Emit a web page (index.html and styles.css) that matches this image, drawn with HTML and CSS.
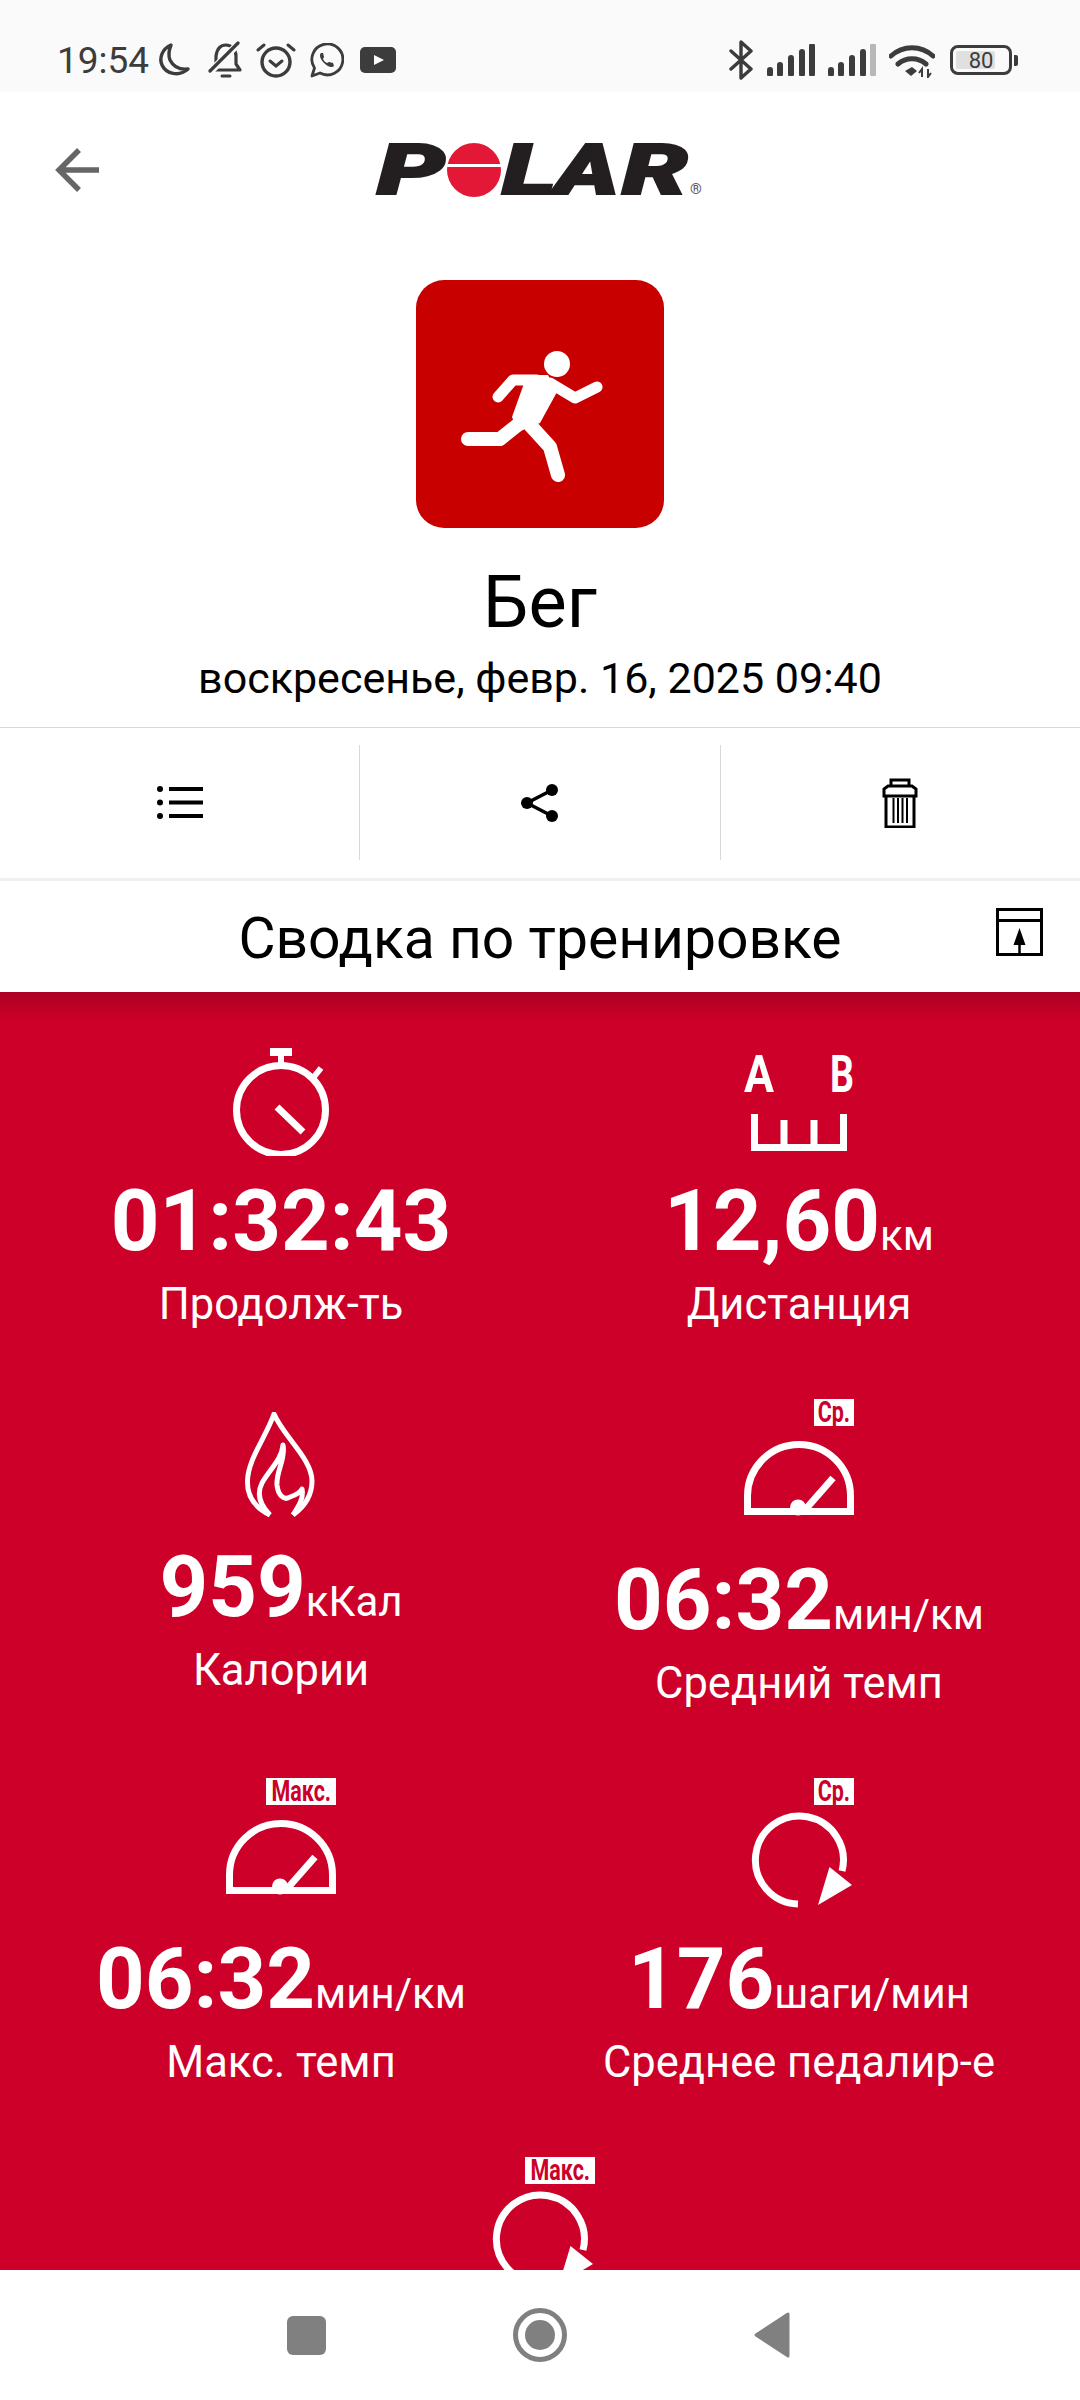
FILE: index.html
```html
<!DOCTYPE html>
<html lang="ru">
<head>
    <meta charset="UTF-8">
    <meta name="viewport" content="width=device-width, initial-scale=1.0">
    <title>Polar Flow</title>
    <link rel="stylesheet" href="styles.css">
</head>
<body>
    <div class="status-bar">
        <div class="status-left">
            <span class="clock">19:54</span>
            <svg class="ico-moon" width="34" height="36" viewBox="0 0 34 36"><path d="M14 3C5 7 2 16 5 23c4 9 17 12 26 4-9 1-15-3-18-9-2-5-1-10 1-15z" fill="none" stroke="#3c3c3c" stroke-width="3.4" stroke-linejoin="round"/></svg>
            <svg class="ico-bell" width="36" height="38" viewBox="0 0 36 38"><path d="M6 29h26l-4-6v-8c0-6-4-11-10-11S9 8 8 15v7z" fill="none" stroke="#3c3c3c" stroke-width="3.2" stroke-linejoin="round"/><path d="M2 31L31 2" stroke="#fafafa" stroke-width="7"/><path d="M2 30L30 2" stroke="#3c3c3c" stroke-width="3.2" stroke-linecap="round"/><path d="M14 35h8" stroke="#3c3c3c" stroke-width="3" stroke-linecap="round"/></svg>
            <svg class="ico-alarm" width="40" height="36" viewBox="0 0 40 36"><circle cx="20" cy="20" r="14" fill="none" stroke="#3c3c3c" stroke-width="3.4"/><path d="M14 19l6 5 6-5" fill="none" stroke="#3c3c3c" stroke-width="3" stroke-linecap="round"/><path d="M2 8l6-5M38 8l-6-5" stroke="#3c3c3c" stroke-width="3" stroke-linecap="round"/></svg>
            <svg class="ico-wa" width="34" height="35" viewBox="0 0 34 35"><path d="M2 33l2.500-8A15.500 15.500 0 1 1 10 30z" fill="none" stroke="#3c3c3c" stroke-width="2.800" stroke-linejoin="round"/><path d="M11 10c-2 2-1 6 3 10s8 5 10 3l-1-3-4-1-2 1c-2-1-3-2-4-4l1-2-1-4z" fill="#3c3c3c"/></svg>
            <svg class="ico-yt" width="36" height="26" viewBox="0 0 36 26"><rect width="36" height="26" rx="5" fill="#3c3c3c"/><path d="M14 8l10 5-10 5z" fill="#fafafa"/></svg>
        </div>
        <div class="status-right">
            <svg width="25" height="40" viewBox="0 0 25 40"><path d="M2 11l20 18-10 9V2l10 9L2 29" fill="none" stroke="#3c3c3c" stroke-width="3.400" stroke-linejoin="round" stroke-linecap="round"/></svg>
            <svg class="ico-signal" width="48" height="32" viewBox="0 0 48 32"><path d="M3 26v4M13 21v9M24 14v16M35 8v22M45 2v28" stroke="#3c3c3c" stroke-width="6" stroke-linecap="round"/></svg>
            <svg class="ico-signal" width="48" height="32" viewBox="0 0 48 32"><path d="M3 26v4M13 21v9M24 14v16M35 8v22" stroke="#3c3c3c" stroke-width="6" stroke-linecap="round"/><path d="M45 2v28" stroke="#b8b8b8" stroke-width="6" stroke-linecap="round"/></svg>
            <svg class="ico-wifi" width="46" height="34" viewBox="0 0 46 34"><path d="M2 12c12-11 30-11 42 0M9 20c8-7 20-7 28 0" fill="none" stroke="#3c3c3c" stroke-width="5" stroke-linecap="round"/><path d="M16 27l7-4 5 4-6 5z" fill="#3c3c3c"/><path d="M33 33v-8l-3 4M39 25v8l3-4" fill="none" stroke="#3c3c3c" stroke-width="2"/></svg>
            <div class="battery">
                <div class="battery-body"><div class="battery-fill"></div><span class="battery-num">80</span></div>
                <div class="battery-nub"></div>
            </div>
        </div>
    </div>

    <div class="toolbar">
        <svg class="back" width="44" height="44" viewBox="0 0 44 44"><path d="M44 22H4M24 2L4 22l20 20" fill="none" stroke="#666" stroke-width="5.500"/></svg>
        <svg class="logo" width="330" height="96" viewBox="-2 -20 330 96">
            <text class="logo-letter" x="0" y="52" textLength="68" lengthAdjust="spacingAndGlyphs">P</text>
            <circle cx="97" cy="28" r="27" fill="#e31837"/>
            <rect x="68" y="22" width="58" height="3" fill="#fff"/>
            <text class="logo-letter" x="125" y="52" textLength="54" lengthAdjust="spacingAndGlyphs">L</text>
            <text class="logo-letter" x="178" y="52" textLength="64" lengthAdjust="spacingAndGlyphs">A</text>
            <text class="logo-letter" x="245" y="52" textLength="66" lengthAdjust="spacingAndGlyphs">R</text>
            <text class="logo-reg" x="313" y="52">®</text>
        </svg>
    </div>

    <div class="hero">
        <div class="sport-tile">
            <svg width="248" height="248" viewBox="0 0 248 248">
                <circle cx="141" cy="84" r="13" fill="#fff"/>
                <path d="M111 95h21l9 17-17 31-22 9-6-15z" fill="#fff"/>
                <path d="M82 117l15-17h24M134 103l25 15 22-11" fill="none" stroke="#fff" stroke-width="11" stroke-linecap="round" stroke-linejoin="round"/>
                <path d="M52 159h32l20-16M114 145l20 22 8 28" fill="none" stroke="#fff" stroke-width="14" stroke-linecap="round" stroke-linejoin="round"/>
            </svg>
        </div>
        <div class="sport-name">Бег</div>
        <div class="sport-date">воскресенье, февр. 16, 2025 09:40</div>
    </div>

    <div class="actions">
        <div class="action">
            <svg width="46" height="33" viewBox="0 0 46 33"><circle cx="3" cy="3" r="3"/><circle cx="3" cy="16.500" r="3"/><circle cx="3" cy="30" r="3"/><path d="M12 3h34M12 16.500h34M12 30h34" stroke="#000" stroke-width="4"/></svg>
        </div>
        <div class="action">
            <svg width="38" height="38" viewBox="0 0 38 38"><path d="M31 6L6 19l25 13" fill="none" stroke="#000" stroke-width="3.500"/><circle cx="31" cy="6" r="6"/><circle cx="6" cy="19" r="6"/><circle cx="31" cy="32" r="6"/></svg>
        </div>
        <div class="action">
            <svg width="36" height="50" viewBox="0 0 36 50"><path d="M9 9V2h18v7M2 18V11l4-3h24l4 3v7zM4 18v31h28V18" fill="none" stroke="#000" stroke-width="3"/><path d="M11.500 20v25M16 20v25M20.500 20v25M25 20v25" stroke="#000" stroke-width="2"/></svg>
        </div>
    </div>

    <div class="summary-head">
        <span></span>
        <h1 class="summary-title">Сводка по тренировке</h1>
        <svg class="summary-btn" width="47" height="48" viewBox="0 0 47 48"><path d="M1.500 1.500h44v45h-44zM1.500 12.500h44" fill="none" stroke="#000" stroke-width="3"/><path d="M23.500 48V30" stroke="#000" stroke-width="2.500"/><path d="M23.500 20l6 17h-12z"/></svg>
    </div>

    <div class="stats">
        <div class="stat">
            <svg class="stat-icon" width="110" height="110" viewBox="0 -1 110 110">
                <g fill="none" stroke="#fff">
                    <circle cx="55" cy="63" r="44.500" stroke-width="7"/>
                    <path d="M87 31l8-10" stroke-width="6"/>
                    <path d="M51 60l26 25" stroke-width="7"/>
                </g>
                <rect x="44" y="1" width="22" height="8" fill="#fff"/>
                <rect x="52" y="9" width="6" height="10" fill="#fff"/>
            </svg>
            <div class="stat-value">01:32:43</div>
            <div class="stat-label">Продолж-ть</div>
        </div>
        <div class="stat">
            <svg class="stat-icon icon-ab" width="110" height="118" viewBox="0 -9 110 118">
                <text class="ab-letter" x="0" y="45" textLength="30" lengthAdjust="spacingAndGlyphs">A</text>
                <text class="ab-letter" x="86" y="45" textLength="24" lengthAdjust="spacingAndGlyphs">B</text>
                <path d="M10.500 67v33.500h89V67M40 73v28M70 73v28" fill="none" stroke="#fff" stroke-width="7"/>
            </svg>
            <div class="stat-value">12,60<span class="stat-unit">км</span></div>
            <div class="stat-label">Дистанция</div>
        </div>
        <div class="stat">
            <svg class="stat-icon" width="110" height="110" viewBox="0 3 110 110">
                <g fill="none" stroke="#fff" stroke-width="5" stroke-linejoin="round">
                    <path d="M44 106C28 98 21 86 21.500 72 22 50 40 28 48 5c10 23 38 45 38 67 0 14-8 26-19 34"/>
                    <path d="M44 106C34 96 30 86 36 74 44 60 56 50 57 36c3 14-7 26-6 40 1 10 7 16 13 12 6-2 10-4 12-8 2 10-4 18-9 26"/>
                </g>
            </svg>
            <div class="stat-value">959<span class="stat-unit">кКал</span></div>
            <div class="stat-label">Калории</div>
        </div>
        <div class="stat">
            <div class="icon-wrap">
                <span class="badge badge-avg"><span class="badge-text">Ср.</span></span>
                <svg width="110" height="109" viewBox="0 0 110 109">
                    <use href="#gauge"/>
                </svg>
            </div>
            <div class="stat-value">06:32<span class="stat-unit">мин/км</span></div>
            <div class="stat-label">Средний темп</div>
        </div>
        <div class="stat">
            <div class="icon-wrap">
                <span class="badge badge-max"><span class="badge-text">Макс.</span></span>
                <svg width="110" height="109" viewBox="0 0 110 109">
                    <use href="#gauge"/>
                </svg>
            </div>
            <div class="stat-value">06:32<span class="stat-unit">мин/км</span></div>
            <div class="stat-label">Макс. темп</div>
        </div>
        <div class="stat">
            <div class="icon-wrap">
                <span class="badge badge-avg"><span class="badge-text">Ср.</span></span>
                <svg width="110" height="109" viewBox="0 0 110 109">
                    <use href="#cycle"/>
                </svg>
            </div>
            <div class="stat-value">176<span class="stat-unit">шаги/мин</span></div>
            <div class="stat-label">Среднее педалир-е</div>
        </div>
        <div class="stat stat-wide">
            <div class="icon-wrap">
                <span class="badge badge-max"><span class="badge-text">Макс.</span></span>
                <svg width="110" height="109" viewBox="0 0 110 109">
                    <use href="#cycle"/>
                </svg>
            </div>
        </div>
    </div>

    <div class="nav-bar">
        <div class="nav-square"></div>
        <div class="nav-home"><div class="nav-home-dot"></div></div>
        <svg width="36" height="46" viewBox="0 0 36 46"><path d="M34 2v42L2 23z" fill="#808080" stroke="#808080" stroke-width="3" stroke-linejoin="round"/></svg>
    </div>

    <svg class="defs" width="0" height="0">
        <defs>
            <g id="gauge">
                <path d="M3.500 85.500V70A51.500 51.500 0 0 1 106.500 70V85.500Z" fill="none" stroke="#fff" stroke-width="7"/>
                <path d="M60 85l29-33" stroke="#fff" stroke-width="7"/>
                <circle cx="54" cy="81.500" r="8" fill="#fff"/>
            </g>
            <g id="cycle">
                <path d="M54 99A44 44 0 1 1 98 66" fill="none" stroke="#fff" stroke-width="7"/>
                <path d="M85.500 62L108 80 74 100z" fill="#fff"/>
            </g>
        </defs>
    </svg>
</body>
</html>
```

FILE: styles.css
```css
* {
    box-sizing: border-box;
}
body {
    margin: 0;
    width: 1080px;
    height: 2400px;
    display: flex;
    flex-direction: column;
    overflow: hidden;
    background: white;
    font-family: Roboto, sans-serif;
    color: #000;
}
.status-bar {
    height: 92px;
    flex: none;
    background: #fafafa;
    display: flex;
    justify-content: space-between;
    align-items: center;
    padding: 0 62px 0 57px;
    color: #3c3c3c;
}
.status-left {
    display: flex;
    align-items: center;
    margin-top: 28px;
}
.clock {
    font-size: 37px;
    width: 100px;
}
.ico-bell {
    margin-left: 17px;
}
.ico-alarm {
    margin-left: 12px;
}
.ico-wa {
    margin-left: 14px;
}
.ico-yt {
    margin-left: 16px;
}
.status-right {
    display: flex;
    align-items: center;
    gap: 13px;
    margin-top: 28px;
}
.ico-wifi {
    margin-top: 2px;
}
.battery {
    display: flex;
    align-items: center;
    margin-left: 2px;
    gap: 2px;
}
.battery-body {
    position: relative;
    width: 62px;
    height: 30px;
    border: 3px solid #3c3c3c;
    border-radius: 8px;
    display: flex;
    align-items: center;
    justify-content: center;
}
.battery-fill {
    position: absolute;
    left: 3px;
    top: 3px;
    bottom: 3px;
    width: 39px;
    background: #e0e0e0;
    border-radius: 2px;
}
.battery-num {
    position: relative;
    font-size: 22px;
    color: #3c3c3c;
}
.battery-nub {
    width: 4px;
    height: 11px;
    background: #3c3c3c;
    border-radius: 0 2px 2px 0;
}
.toolbar {
    flex: none;
    height: 188px;
    display: grid;
    grid-template-columns: 1fr auto 1fr;
    align-items: center;
    padding: 30px 0 62px;
}
.back {
    margin-left: 55px;
}
.logo-letter {
    font-family: Roboto, sans-serif;
    font-size: 70px;
    font-weight: 900;
    font-style: italic;
    fill: #231f20;
    stroke: #231f20;
    stroke-width: 2;
}
.logo-reg {
    font-family: Roboto, sans-serif;
    font-size: 15px;
    fill: #555;
}
.hero {
    flex: none;
    height: 447px;
    display: flex;
    flex-direction: column;
    align-items: center;
}
.sport-tile {
    width: 248px;
    height: 248px;
    border-radius: 28px;
    background: #c80000;
}
.sport-name {
    margin-top: 33px;
    font-size: 72px;
    line-height: 84px;
}
.sport-date {
    margin-top: 6px;
    font-size: 43px;
    line-height: 54px;
}
.actions {
    flex: none;
    height: 154px;
    display: flex;
    padding: 17px 0 18px;
    border-top: 1px solid #d8d8d8;
    border-bottom: 3px solid #f0f0f0;
}
.action {
    flex: 1;
    display: flex;
    align-items: center;
    justify-content: center;
}
.action + .action {
    border-left: 1px solid #d8d8d8;
}
.summary-head {
    flex: none;
    height: 111px;
    display: grid;
    grid-template-columns: 1fr auto 1fr;
    align-items: center;
    padding: 0 37px;
}
.summary-title {
    margin: 4px 0 0;
    font-size: 57px;
    font-weight: 400;
}
.summary-btn {
    justify-self: end;
    margin-bottom: 10px;
}
.stats {
    flex: 1;
    min-height: 0;
    overflow: hidden;
    background: linear-gradient(#ac0025, #cc0028 28px);
    padding: 54px 22px 0;
    color: white;
    display: grid;
    grid-template-columns: 518px 518px;
    align-items: center;
    align-content: start;
    row-gap: 69px;
}
.stat {
    display: flex;
    flex-direction: column;
    align-items: center;
}
.stat-wide {
    grid-column: 1 / 3;
}
.stat-icon {
    display: block;
}
.icon-ab {
    margin-top: -8px;
}
.ab-letter {
    font-family: Roboto, sans-serif;
    font-size: 52px;
    font-weight: 700;
    fill: white;
}
.icon-wrap {
    width: 110px;
    display: flex;
    flex-direction: column;
    align-items: flex-end;
}
.icon-wrap svg {
    display: block;
}
.badge {
    height: 27px;
    background: white;
    color: #cc0028;
    display: flex;
    align-items: center;
    justify-content: center;
}
.badge-avg {
    width: 40px;
}
.badge-max {
    width: 70px;
}
.badge-text {
    font-size: 29px;
    line-height: 27px;
    font-weight: 700;
    transform: scaleX(0.74);
    white-space: nowrap;
}
.stat-value {
    margin-top: 15px;
    font-size: 85px;
    font-weight: 700;
    line-height: 100px;
    white-space: nowrap;
}
.stat-unit {
    font-size: 42px;
    font-weight: 400;
    line-height: 1;
}
.stat-label {
    margin-top: 9px;
    font-size: 43.5px;
    line-height: 50px;
    white-space: nowrap;
}
.nav-bar {
    flex: none;
    height: 130px;
    background: white;
    display: flex;
    align-items: center;
    justify-content: center;
    padding-right: 4px;
}
.nav-square {
    width: 39px;
    height: 39px;
    border-radius: 6px;
    background: #808080;
    margin-right: 187px;
}
.nav-home {
    width: 54px;
    height: 54px;
    border: 5px solid #808080;
    border-radius: 50%;
    display: flex;
    align-items: center;
    justify-content: center;
    margin-right: 187px;
}
.nav-home-dot {
    width: 30px;
    height: 30px;
    border-radius: 50%;
    background: #808080;
}
.defs {
    position: absolute;
}
```
